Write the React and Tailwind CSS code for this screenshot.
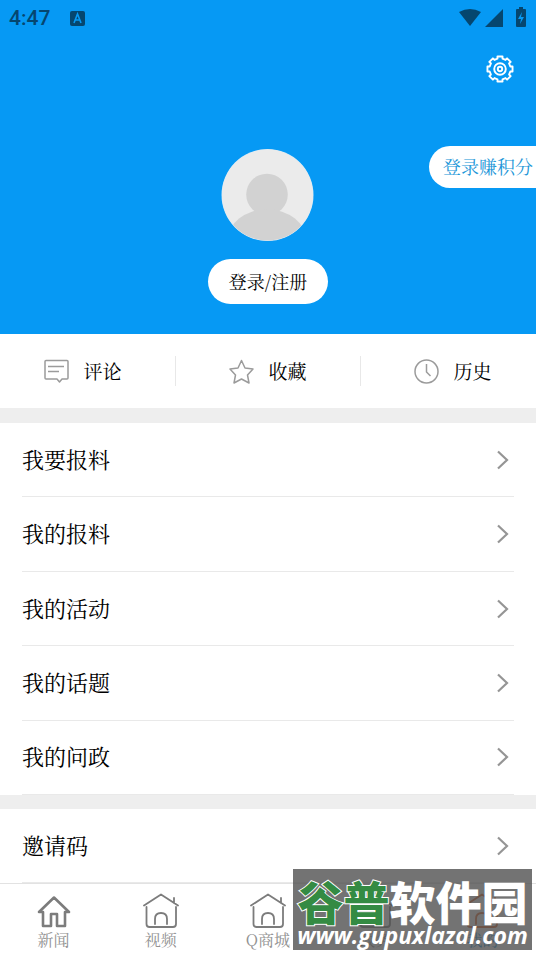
import React from 'react';

function StatusBar() {
  return (
    <div className="flex h-9 items-center justify-between px-[9px] text-[#05466f]">
      <div className="flex items-center gap-5">
        <span className="font-['Roboto',sans-serif] text-[21px] leading-6 font-medium">4:47</span>
        <svg width="15" height="15" viewBox="0 0 15 15" aria-hidden="true">
          <rect width="15" height="15" rx="2" fill="currentColor" />
          <path d="M4 12 7.5 3 11 12M5.3 9h4.4" fill="none" stroke="#0699f4" strokeWidth="1.6" />
        </svg>
      </div>
      <svg width="68" height="22" viewBox="0 0 68 22" fill="currentColor" aria-hidden="true">
        <path d="M0 5Q11-1 22 5L11 19Z" />
        <path d="M44 2V20H26Z" />
        <path d="M58 2h2V0h4v2h2q1 0 1 1v16q0 1-1 1h-8q-1 0-1-1V3q0-1 1-1Z" />
        <path d="M63 5l-4 7h3l-1 5 4-7h-3Z" fill="#0699f4" />
      </svg>
    </div>
  );
}

function GearIcon() {
  const teeth = 8;
  const pts = [];
  for (let i = 0; i < teeth; i++) {
    const base = ((i + 0.5) * 2 * Math.PI) / teeth;
    [[-0.24, 10.6], [-0.2, 12.8], [0.2, 12.8], [0.24, 10.6]].forEach(([a, r]) => {
      pts.push(`${(14 + r * Math.sin(base + a)).toFixed(2)},${(14 - r * Math.cos(base + a)).toFixed(2)}`);
    });
  }
  return (
    <svg width="28" height="28" viewBox="0 0 28 28" fill="none" stroke="white" strokeWidth="1.9" strokeLinejoin="round" aria-hidden="true">
      <polygon points={pts.join(' ')} transform="rotate(22.5 14 14)" />
      <circle cx="14" cy="14" r="5.8" />
      <circle cx="14" cy="14" r="2.2" />
    </svg>
  );
}

function Avatar() {
  return (
    <svg width="93" height="92" viewBox="0 0 93 93" aria-hidden="true">
      <clipPath id="avatar-clip"><circle cx="46.5" cy="46.5" r="46" /></clipPath>
      <circle cx="46.5" cy="46.5" r="46.5" fill="#d8eaf6" />
      <g clipPath="url(#avatar-clip)">
        <rect width="93" height="93" fill="#ebebeb" />
        <circle cx="46" cy="46" r="21" fill="#d2d2d2" />
        <ellipse cx="46" cy="93" rx="40" ry="32" fill="#d2d2d2" />
      </g>
    </svg>
  );
}

const statIcons = {
  comment: <path d="M2 1.500h21q1 0 1 1V19q0 1-1 1h-5l-2.500 3-2.500-3H2q-1 0-1-1V2.500q0-1 1-1ZM4 7.500h16M4 12.500h11" />,
  star: <path d="M12.500 1.500 16 9l8 1-5.500 6 1.500 8-7.500-4L5 24l1.500-8L1 10l8-1Z" />,
  clock: <><circle cx="12.500" cy="12.500" r="11.500" /><path d="M12.500 5v8l4 4" /></>,
};

const stats = [
  { label: '评论', icon: 'comment' },
  { label: '收藏', icon: 'star' },
  { label: '历史', icon: 'clock' },
];

function MenuRow({ label }) {
  return (
    <li className="flex flex-1 border-b border-[#e9e9e9]">
      <button className="flex w-full items-center justify-between pr-1 text-[22px] leading-8">
        <span className="pb-0.5">{label}</span>
        <svg width="14" height="20" viewBox="0 0 14 20" fill="none" stroke="#959595" strokeWidth="2.2" aria-hidden="true">
          <path d="M2 1.500 11 10 2 18.500" />
        </svg>
      </button>
    </li>
  );
}

function HomeIcon({ solid }) {
  return (
    <svg width="36" height="36" viewBox="0 0 36 36" fill="none" stroke="currentColor" strokeWidth="1.800" strokeLinejoin="round" strokeLinecap="round" aria-hidden="true">
      {solid ? (
        <path d="M3 19 18 4.500 33 19H29V33H21V21H15V33H7V19Z" strokeWidth="2.600" />
      ) : (
        <path d="M1 12.500 18 1.500 35 12.500M31 10V5M3.500 14V31q0 3 3 3H30q3 0 3-3V14M12 31V26q0-6 6-6t6 6v5" />
      )}
    </svg>
  );
}

const tabs = [
  { label: '新闻', solid: true },
  { label: '视频' },
  { label: 'Q商城' },
  { label: '政务' },
  { label: '我的', active: true },
];

function Watermark() {
  return (
    <div className="absolute right-1 bottom-1 h-[81px] w-[239px] bg-[#505050]/80 text-white">
      <div className="flex h-[54px] justify-center font-['Noto_Sans_CJK_SC',sans-serif] text-[46px] leading-[62px] font-black">
        <span className="text-[#348b43] [paint-order:stroke_fill] [-webkit-text-stroke:2px_white]">谷普</span>
        <span>软件园</span>
      </div>
      <div className="flex justify-center font-['Open_Sans',sans-serif] text-[23px] leading-6 font-bold whitespace-nowrap italic">www.gupuxlazal.com</div>
    </div>
  );
}

export default function App() {
  return (
    <div className="relative flex min-h-screen flex-col overflow-x-hidden bg-white font-['Noto_Serif_CJK_SC','Noto_Sans_CJK_SC',serif] text-black">
      <header className="flex h-[334px] flex-col bg-[#0699f4]">
        <StatusBar />
        <div className="flex justify-end pt-[19px] pr-[22px]">
          <button aria-label="设置"><GearIcon /></button>
        </div>
        <div className="grid grid-cols-3 items-start pt-[63px]">
          <div className="col-start-2 flex flex-col items-center gap-[18px] pt-[3px]">
            <Avatar />
            <button className="h-[45px] w-[120px] rounded-full bg-white pb-0.5 text-[18px] leading-6">登录/注册</button>
          </div>
          <button className="h-[42px] w-[107px] justify-self-end rounded-l-full bg-white pb-0.5 pl-[11px] text-[18px] leading-6 whitespace-nowrap text-[#2196d8]">登录赚积分</button>
        </div>
      </header>
      <nav className="-mx-[9px] flex h-[74px] items-center" aria-label="个人">
        {stats.map(({ label, icon }, i) => (
          <button key={label} className={`flex h-[30px] flex-1 items-center justify-center gap-[14px] text-[19px] leading-7 ${i < 2 ? 'border-r border-[#e8e8e8]' : ''}`}>
            <svg width="25" height="25" viewBox="0 0 25 25" fill="none" stroke="#9b9b9b" strokeWidth="1.500" strokeLinejoin="round" aria-hidden="true">{statIcons[icon]}</svg>
            {label}
          </button>
        ))}
      </nav>
      <main className="border-t-[15px] border-[#eeeeee]">
        <ul className="flex h-[372px] flex-col px-[22px]">
          {['我要报料', '我的报料', '我的活动', '我的话题', '我的问政'].map((label) => <MenuRow key={label} label={label} />)}
        </ul>
        <ul className="flex h-[88px] flex-col border-t-[14px] border-[#eeeeee] px-[22px]">
          <MenuRow label="邀请码" />
        </ul>
      </main>
      <nav className="grid h-[71px] grid-cols-5 border-t border-[#e2e2e2]" aria-label="主导航">
        {tabs.map(({ label, solid, active }) => (
          <button key={label} className="flex flex-col items-center pt-[9px] text-[#7c7c7c]">
            <span className={active ? 'text-[#e0642a]' : ''}><HomeIcon solid={solid} /></span>
            <span className={`text-[16px] leading-[22px] whitespace-nowrap ${active ? 'text-[#2196d8]' : 'text-[#929292]'}`}>{label}</span>
          </button>
        ))}
      </nav>
      <Watermark />
    </div>
  );
}
